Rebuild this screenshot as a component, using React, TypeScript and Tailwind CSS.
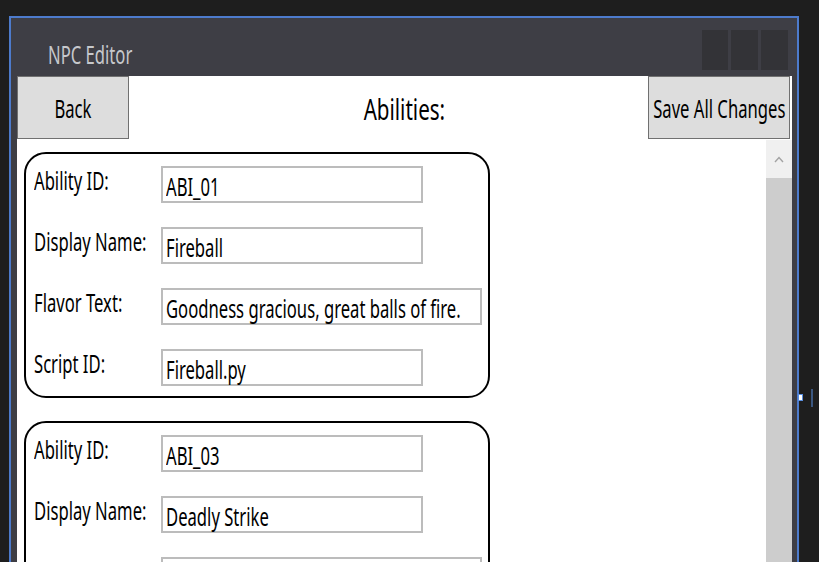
/* NPC Editor — abilities page */
import type { ReactNode } from "react";

type Row = { label: string; value: string; wide?: boolean };

const abilities: { id: string; rows: Row[] }[] = [
  {
    id: "ABI_01",
    rows: [
      { label: "Ability ID:", value: "ABI_01" },
      { label: "Display Name:", value: "Fireball" },
      { label: "Flavor Text:", value: "Goodness gracious, great balls of fire.", wide: true },
      { label: "Script ID:", value: "Fireball.py" },
    ],
  },
  {
    id: "ABI_03",
    rows: [
      { label: "Ability ID:", value: "ABI_03" },
      { label: "Display Name:", value: "Deadly Strike" },
      // scrolled out of view below this point
      { label: "", value: "", wide: true },
    ],
  },
];

// the source UI uses a narrow font, so squeeze Noto Sans horizontally
function T({ children, center }: { children: ReactNode; center?: boolean }) {
  return (
    <span className={`inline-block whitespace-nowrap scale-x-[0.64] ${center ? "origin-center" : "origin-left"}`}>
      {children}
    </span>
  );
}

function Field({ label, value, wide }: Row) {
  return (
    <div className="flex items-start h-[37px] shrink-0">
      <div className="w-[135px] pl-[8px] pt-[1px] text-[26px] leading-[26px] text-black">
        <T>{label}</T>
      </div>
      <div
        className={`${wide ? "w-[321px]" : "w-[262px]"} h-[37px] border-2 border-[#bcbcbc] bg-white pl-[3px] pt-[5px] text-[26px] leading-[26px] text-black`}
      >
        <T>{value}</T>
      </div>
    </div>
  );
}

export default function App() {
  return (
    <div className="relative w-[819px] h-[562px] overflow-hidden bg-[#1e1e1e] pt-[16px] pl-[9px] font-['Noto_Sans',sans-serif]">
      {/* window */}
      <div className="w-[790px] h-[560px] border-t-2 border-x-2 border-[#4d7bcc] bg-[#3e3e45] flex flex-col">
        {/* title bar */}
        <div className="h-[58px] shrink-0 flex items-start justify-between">
          <div className="pl-[37px] pt-[23px] text-[26px] leading-[26px] text-[#c6c8cc]">
            <T>NPC Editor</T>
          </div>
          <div className="flex gap-[3px] pt-[12px] pr-[9px]">
            <div className="w-[26px] h-[40px] bg-[#333337]" />
            <div className="w-[27px] h-[40px] bg-[#333337]" />
            <div className="w-[27px] h-[40px] bg-[#333337]" />
          </div>
        </div>

        {/* client area */}
        <div className="flex-1 flex pl-[6px] pr-[5px] min-h-0">
          <div className="flex-1 bg-white flex flex-col min-h-0">
            {/* header */}
            <div className="h-[64px] shrink-0 grid grid-cols-[1fr_auto_1fr] items-start">
              <div className="justify-self-start w-[112px] h-[63px] bg-[#dddddd] border border-[#707070] flex items-center justify-center text-[26px] leading-[26px] text-black">
                <T center>Back</T>
              </div>
              <div className="pt-[18px] text-[29px] leading-[29px] text-black">
                <span className="inline-block whitespace-nowrap scale-x-[0.71] origin-center">Abilities:</span>
              </div>
              <div className="justify-self-end mr-[2px] w-[142px] h-[63px] bg-[#dddddd] border border-[#707070] flex items-center justify-center text-[26px] leading-[26px] text-black">
                <T center>Save All Changes</T>
              </div>
            </div>

            {/* scroll body */}
            <div className="flex-1 flex min-h-0">
              <div className="flex-1 pl-[7px] pt-[12px] flex flex-col gap-[23px] overflow-hidden">
                {abilities.map((a) => (
                  <div
                    key={a.id}
                    className="w-[466px] h-[246px] shrink-0 border-2 border-black rounded-[22px] pt-[12px] flex flex-col gap-[24px]"
                  >
                    {a.rows.map((r, i) => (
                      <Field key={i} label={r.label} value={r.value} wide={r.wide} />
                    ))}
                  </div>
                ))}
              </div>
              {/* scrollbar */}
              <div className="w-[26px] flex flex-col">
                <div className="h-[38px] bg-[#f0f0f0] flex items-center justify-center">
                  <svg width="10" height="7" viewBox="0 0 10 7">
                    <polyline points="1,6 5,1.5 9,6" fill="none" stroke="#a3a3a3" strokeWidth="1.4" />
                  </svg>
                </div>
                <div className="flex-1 bg-[#cdcdcd]" />
              </div>
            </div>
          </div>
        </div>
      </div>

      {/* resize grip artefacts at the right edge */}
      <div className="absolute left-[798px] top-[394px] w-[5px] h-[7px] border border-[#5b8fe0] bg-white" />
      <div className="absolute left-[811px] top-[389px] w-[2px] h-[18px] bg-[#3b5780]" />
    </div>
  );
}
